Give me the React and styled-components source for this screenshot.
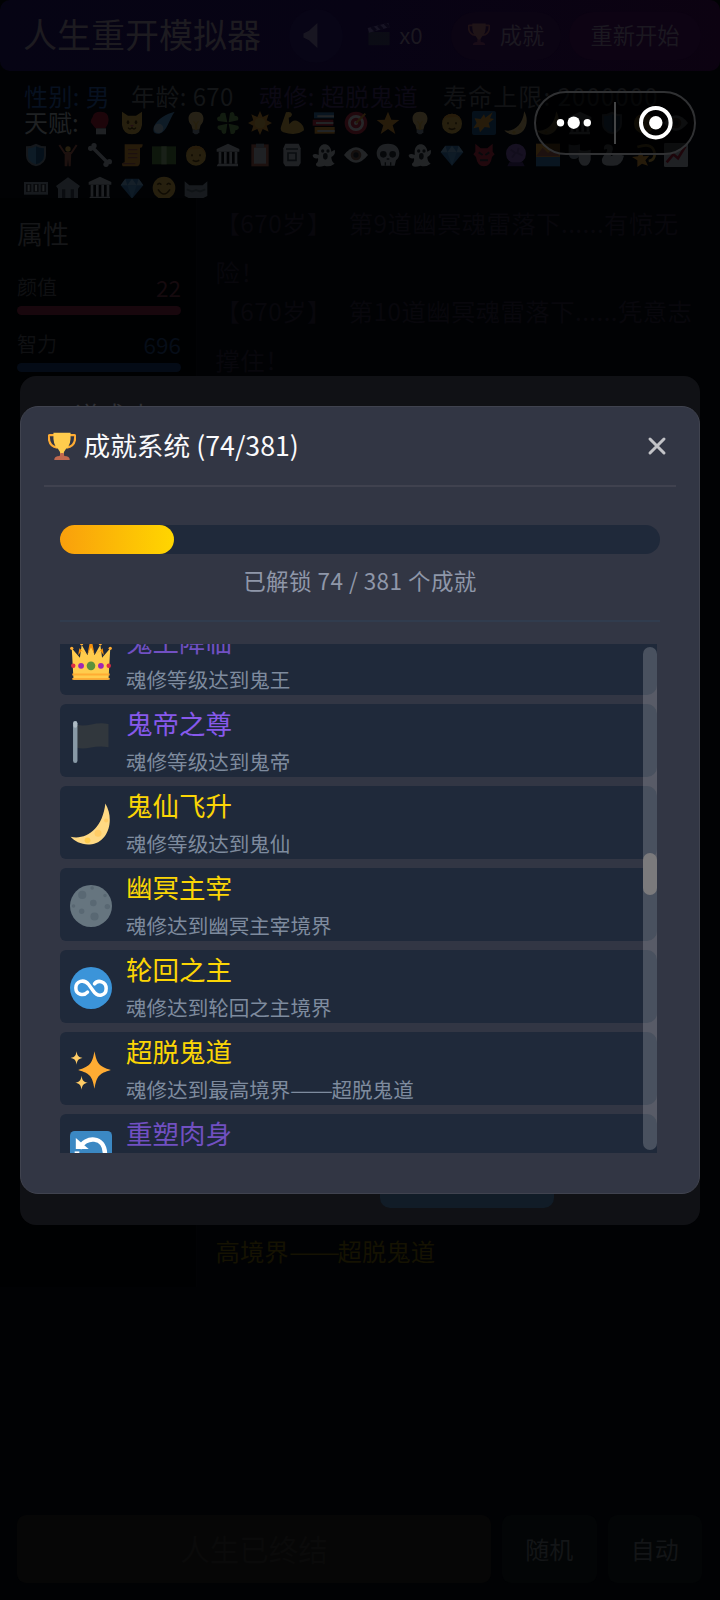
import styled, { createGlobalStyle } from "styled-components";

const GlobalStyle = createGlobalStyle`
  * {
    box-sizing: border-box;
  }

  body {
    margin: 0;
    background: #010204;
    font-family: "Noto Sans CJK SC", sans-serif;
    font-weight: 400;
  }
`;

const Page = styled.main`
  position: relative;
  display: flex;
  flex-direction: column;
  width: 720px;
  height: 1600px;
  overflow: hidden;
  background: #010204;
`;

const Header = styled.header`
  display: flex;
  align-items: center;
  height: 71px;
  padding-left: 23px;
  border-radius: 10px;
  background: linear-gradient(90deg, #060414 0%, #070314 50%, #0c0211 100%);
`;

const AppTitle = styled.h1`
  width: 266px;
  margin: -3px 0 0;
  font-size: 34px;
  font-weight: 400;
  line-height: 1;
  color: #1d1b20;
`;

const SoundButton = styled.button`
  display: grid;
  place-items: center;
  width: 54px;
  height: 54px;
  padding: 0;
  border: 0;
  border-radius: 50%;
  background: #080516;
`;

const HeaderButton = styled.button`
  display: flex;
  align-items: center;
  justify-content: center;
  width: ${({ $width }) => $width}px;
  height: 48px;
  margin-left: ${({ $left }) => $left}px;
  padding: 0 0 3px;
  border: 0;
  border-radius: 24px;
  background: ${({ $bg }) => $bg || "transparent"};
  color: #1b1820;
  font: inherit;
  font-size: 22.3px;
  line-height: 1;
`;

const Info = styled.section`
  height: 127px;
  padding: 13px 24px 0;
  overflow: hidden;
`;

const InfoLine = styled.div`
  display: flex;
  height: 24px;
  font-size: 24px;
  line-height: 24px;
  letter-spacing: 0.4px;
  white-space: pre;
`;

const Stat = styled.span`
  width: ${({ $width }) => $width}px;
  color: ${({ $color }) => $color};
  letter-spacing: ${({ $wide }) => $wide && "1.1px"};
`;

const TalentLine = styled.div`
  display: flex;
  align-items: center;
  height: 32.5px;
  margin-top: ${({ $first }) => ($first ? "-1.5px" : 0)};
`;

const TalentLabel = styled.span`
  width: 64px;
  margin-top: -2px;
  font-size: 24px;
  line-height: 1;
  color: #1f2123;
`;

const Talent = styled.span`
  display: flex;
  width: 32px;
  opacity: ${({ $faint }) => ($faint ? 0.08 : 0.145)};
`;

const Body = styled.section`
  display: flex;
  height: 1089px;
`;

const Sidebar = styled.aside`
  width: 197px;
  padding: 20px 15px 0 17px;
  background: #000102;
  border-right: 1px solid #020305;
`;

const SidebarTitle = styled.h2`
  margin: 0 0 24px;
  font-size: 26px;
  font-weight: 400;
  line-height: 30px;
  color: #151618;
`;

const Attribute = styled.div`
  height: 57px;
  padding-top: 4px;
`;

const AttributeHead = styled.div`
  display: flex;
  justify-content: space-between;
  margin-bottom: 8px;
  font-size: 20px;
  line-height: 22px;
  color: #0f1012;

  b {
    font-size: 22.5px;
    font-weight: 400;
    color: ${({ $color }) => $color};
  }
`;

const AttributeBar = styled.div`
  height: 9px;
  border-radius: 5px;
  background: ${({ $color }) => $color};
`;

const Log = styled.div`
  display: flex;
  flex: 1;
  flex-direction: column;
  padding: 0 0 12px 18.5px;
  font-size: 24.4px;
  line-height: 49px;
  letter-spacing: 0.4px;
  color: #08070c;
  white-space: pre;

  p {
    margin: 0 0 -10px;
  }
`;

const LogHighlight = styled.div`
  margin-top: auto;
  letter-spacing: 0;
  color: #151202;
`;

const DashBox = styled.span`
  display: inline-block;
  width: 2em;
  transform: scaleX(1.25);
  transform-origin: left;
`;

const Footer = styled.footer`
  display: flex;
  gap: 11px;
  margin-top: auto;
  padding: 0 18px 17px 17px;
`;

const FooterButton = styled.button`
  flex: ${({ $wide }) => ($wide ? "1" : "0 0 94.5px")};
  height: 68px;
  padding: 0 0 2px;
  border: 0;
  border-radius: 9px;
  background: ${({ $wide }) => ($wide ? "#060606" : "#030506")};
  color: ${({ $wide }) => ($wide ? "#0a0a0a" : "#131517")};
  font: inherit;
  font-size: ${({ $wide }) => ($wide ? 29.5 : 24)}px;
`;

const BackDialog = styled.section`
  position: absolute;
  top: 376px;
  left: 20px;
  display: flex;
  flex-direction: column;
  width: 680px;
  height: 849px;
  border-radius: 16px;
  background: #101115;

  h2 {
    margin: 20px 30px;
    font-size: 25px;
    font-weight: 400;
    line-height: 36px;
    color: #303136;
  }
`;

const BackDialogButton = styled.div`
  width: 174px;
  height: 68px;
  margin: auto 0 17px 360px;
  border-radius: 10px;
  background: #111c27;
`;

const Dialog = styled.section`
  position: absolute;
  top: 405.5px;
  left: 20px;
  width: 680px;
  height: 788px;
  padding: 0 23px;
  border: 1px solid #40434f;
  border-radius: 18px;
  background: #323644;
`;

const DialogHeader = styled.header`
  display: flex;
  align-items: center;
  height: 80.5px;
  padding: 0 9px 0 4px;
  border-bottom: 2px solid #40424f;

  h2 {
    flex: 1;
    margin: 0 0 0 7.5px;
    font-size: 26.7px;
    font-weight: 400;
    line-height: 1;
    color: #fafafc;
  }
`;

const CloseButton = styled.button`
  display: flex;
  padding: 0;
  border: 0;
  background: none;
`;

const DialogBody = styled.div`
  padding: 38px 16px 0;
`;

const Track = styled.div`
  height: 29px;
  border-radius: 15px;
  background: #1f293a;
`;

const Fill = styled.div`
  height: 100%;
  border-radius: 15px;
  background: linear-gradient(90deg, #f99f0c, #ffd600);
`;

const Summary = styled.p`
  height: 68px;
  margin: 0 0 21.5px;
  padding-top: 12px;
  border-bottom: 2px solid #313c4e;
  font-size: 22.5px;
  line-height: 28px;
  letter-spacing: 0.45px;
  text-align: center;
  color: #8f97a9;
`;

const ListArea = styled.div`
  position: relative;
  width: 597px;
  height: 509.5px;
  overflow: hidden;
`;

const List = styled.div`
  display: flex;
  flex-direction: column;
  gap: 9px;
  margin-top: -22px;
`;

const Row = styled.article`
  display: flex;
  flex: 0 0 73px;
  align-items: center;
  gap: 14px;
  padding-left: 10px;
  border-radius: 6px 10px 10px 6px;
  background: #1f293a;
`;

const RowIcon = styled.span`
  display: flex;
  margin-top: 3px;
`;

const RowTitle = styled.h3`
  margin: 0 0 7px;
  font-size: 26.5px;
  font-weight: 400;
  line-height: 34px;
  color: ${({ $tone }) =>
    ({ gold: "#fbd505", purple: "#8759ec", dim: "#7150c2" })[$tone]};
`;

const RowText = styled.p`
  margin: 0;
  font-size: 20.55px;
  line-height: 28px;
  color: #7e8b9e;
`;

const Scrollbar = styled.div`
  position: absolute;
  top: 3px;
  right: 0;
  bottom: 3px;
  width: 14px;
  padding-top: 206px;
  border-radius: 7px;
  background: rgba(255, 255, 255, 0.19);
`;

const Thumb = styled.div`
  height: 42px;
  border-radius: 7px;
  background: #7b7a7c;
`;

const Capsule = styled.div`
  position: absolute;
  top: 91px;
  left: 534px;
  display: flex;
  align-items: center;
  width: 162px;
  height: 64px;
  border: 2px solid #303133;
  border-radius: 32px;
  background: rgba(0, 0, 0, 0.6);
`;

const SPARK = "c1 7 3 9 9 10c-6 1-8 3-9 10c-1-7-3-9-9-10c6-1 8-3 9-10z";

const face = (
  <>
    <circle cx="18" cy="18" r="17" fill="#ffcc4d" />
    <path d="M8 13q3-4 6 0M22 13q3-4 6 0M9 20q9 14 18 0" fill="none" stroke="#664500" strokeWidth="2.5" />
  </>
);

const child = (
  <>
    <circle cx="18" cy="19" r="15" fill="#ffcc4d" />
    <path d="M4 16C5 0 31 0 32 16L26 9L8 10z" fill="#ffac33" />
    <path d="M12 17v3M24 17v3M13 26q5 3 10 0" fill="none" stroke="#664500" strokeWidth="2.5" />
  </>
);

const temple = (
  <>
    <path d="M18 1L35 9v4H1V9zM3 31h30v4H1z" fill="#ccd6dd" />
    <path d="M6 13v18M14 13v18M22 13v18M30 13v18" stroke="#ccd6dd" strokeWidth="4" />
  </>
);

const ghost = (
  <>
    <path d="M10 13C10-2 28-2 29 13l5-3q2 8-5 11q0 7 5 10q-8 6-15 3Q5 38 6 31q4-2 3-8q-8 1-8-5q3-3 9 0z" fill="#e1e8ed" />
    <circle cx="16" cy="12" r="2.5" fill="#292f33" />
    <circle cx="24" cy="12" r="2.5" fill="#292f33" />
    <ellipse cx="20" cy="20" rx="3.5" ry="5" fill="#292f33" />
  </>
);

const shield = (
  <>
    <path d="M18 1q7 4 15 4v14q0 12-15 16Q3 31 3 19V5q8 0 15-4z" fill="#8899a6" />
    <path d="M18 5q5 3 12 3v11q0 9-12 13Q6 28 6 19V8q7 0 12-3z" fill="#55acee" />
    <path d="M18 5v27q12-4 12-13V8q-7 0-12-3z" fill="#269" />
  </>
);

const gem = (
  <>
    <path d="M8 4h20l7 10-17 20L1 14z" fill="#3f8fd0" />
    <path d="M8 4l3 10L18 4l7 10 3-10 7 10H1z" fill="#8ccaf7" />
    <path d="M11 14h14l-7 20z" fill="#5dadec" />
  </>
);

const bulb = (
  <>
    <path d="M18 1C4 1 5 16 11 21l2 7h10l2-7C31 16 32 1 18 1z" fill="#ffd983" />
    <path d="M13 28h10v4l-3 3h-4l-3-3z" fill="#99aab5" />
    <path d="M14 15l3 4v9M22 15l-3 4v9" fill="none" stroke="#ffcc4d" strokeWidth="2" />
  </>
);

const moon = (
  <>
    <path d="M30.3.5C39 15 32 35 17 35.5C10 36 4 33 .5 29C14 32 28 22 30.3.5z" fill="#ffd983" />
    <circle cx="24" cy="26" r="3" fill="#ffcc66" />
    <circle cx="15" cy="32" r="2.5" fill="#ffcc4d" />
    <circle cx="31" cy="15" r="1.7" fill="#ffcc66" />
  </>
);

const trophy = (
  <>
    <path d="M8 4H2q-1 0-1 2c0 8 4 13 11 14M28 4h6q1 0 1 2c0 8-4 13-11 14" fill="none" stroke="#ffac33" strokeWidth="2.8" />
    <path d="M7 1h22q1 17-6 21-3 3-3 8h-4q0-5-3-8Q6 18 7 1z" fill="#ffcc4d" />
    <path d="M11 36h-3q0-5 7-5l1-4h4l1 4q7 0 7 5z" fill="#c1694f" />
  </>
);

const ART = {
  face,
  child,
  temple,
  ghost,
  shield,
  gem,
  bulb,
  moon,
  trophy,
  glove: (
    <>
      <path d="M7 9Q8 1 19 1q12 0 12 12 0 7-5 13H11L4 17q0-5 3-8z" fill="#be1931" />
      <path d="M12 26h15v9H12z" fill="#ccd6dd" />
    </>
  ),
  cat: (
    <>
      <path d="M3 1l9 6h12l9-6v20q-2 14-15 14T3 21z" fill="#ffcc4d" />
      <ellipse cx="12" cy="17" rx="2" ry="3" fill="#664500" />
      <ellipse cx="24" cy="17" rx="2" ry="3" fill="#664500" />
      <path d="M12 25q3 4 6 0q3 4 6 0" fill="none" stroke="#664500" strokeWidth="2" />
      <path d="M15 21h6l-3 3z" fill="#e75a70" />
    </>
  ),
  comet: (
    <>
      <path d="M34 1C22 4 8 12 3 23q-4 12 8 11C23 30 25 14 34 1z" fill="#5dadec" />
      <circle cx="10" cy="26" r="7" fill="#bdddf4" />
    </>
  ),
  clover: (
    <g fill="#77b255">
      <path d="M17 17L3 15Q-1 9 6 8q0-7 8-5z" />
      <path d="M19 17L21 3q6-4 7 4 7 0 5 7z" />
      <path d="M19 19l14 3q4 5-4 7 0 7-7 5z" />
      <path d="M17 19L15 33q-6 4-7-4-8-1-5-7z" />
    </g>
  ),
  sun: (
    <>
      <path d="M18 0l4 9 9-4-3 9 8 4-8 4 3 9-9-4-4 9-4-9-9 4 3-9-8-4 8-4-3-9 9 4z" fill="#ffac33" />
      <circle cx="18" cy="18" r="8" fill="#ffcc4d" />
    </>
  ),
  arm: <path d="M9 2q8-2 9 3-1 5-5 5l1 10q6-9 14-4 8 5 8 13Q25 38 5 32-1 30 2 22z" fill="#ffcc4d" />,
  books: (
    <>
      <path d="M3 2h30v9H3z" fill="#3b88c3" />
      <path d="M1 13h31v9H1z" fill="#dd2e44" />
      <path d="M4 24h30v10H4z" fill="#ffac33" />
      <path d="M8 8h25M6 18h26M8 30h26" stroke="#e1e8ed" strokeWidth="3" />
    </>
  ),
  target: (
    <>
      <circle cx="18" cy="18" r="17" fill="#dd2e44" />
      <circle cx="18" cy="18" r="10" fill="none" stroke="#fff" strokeWidth="4" />
      <circle cx="18" cy="18" r="3" fill="#fff" />
      <path d="M18 18L32 4" stroke="#ffac33" strokeWidth="3" />
    </>
  ),
  star: <path d="M18 1l5 12 12 .5-10 8 4 13-11-7.5-11 7.5 4-13-10-8L13 13z" fill="#ffac33" />,
  blast: (
    <>
      <rect width="36" height="36" rx="3" fill="#226699" />
      <path d="M31 2l-4 9 6 1-8 6 2 7-8-1-7 8-2-8-8 2 5-8-3-7 9 1 5-7 2 5z" fill="#ffac33" />
    </>
  ),
  person: (
    <>
      <circle cx="18" cy="9" r="4" fill="#ffcc4d" />
      <path d="M5 3l8 12h10l8-12" fill="none" stroke="#c1694f" strokeWidth="3" />
      <path d="M13 14h10l-1 21h-3l-1-11-1 11h-4z" fill="#c1694f" />
    </>
  ),
  bone: (
    <>
      <path d="M6 6l24 24" stroke="#ccd6dd" strokeWidth="5" />
      <g fill="#ccd6dd">
        <circle cx="4" cy="8" r="4" />
        <circle cx="9" cy="4" r="4" />
        <circle cx="32" cy="28" r="4" />
        <circle cx="27" cy="32" r="4" />
      </g>
    </>
  ),
  scroll: (
    <>
      <path d="M7 2h27q0 6-4 5v21q0 7-6 7H4q-3-5 3-6z" fill="#ffac33" />
      <path d="M12 10h14M12 16h14M12 22h14M4 31h19" stroke="#c1694f" strokeWidth="2" />
    </>
  ),
  money: (
    <>
      <path d="M0 5h36v27H0z" fill="#5c913b" />
      <path d="M14 5h8v27h-8z" fill="#a7d28b" />
    </>
  ),
  clipboard: (
    <>
      <path d="M5 2h26v33H5z" fill="#c1694f" />
      <path d="M9 7h18v24H9z" fill="#ccd6dd" />
      <path d="M12 1h12v6H12z" fill="#99aab5" />
    </>
  ),
  tin: (
    <>
      <path d="M8 1h20l3 7v22l-3 5H8l-3-5V8z" fill="#ccd6dd" />
      <path d="M9 9h18M12 15h12v11H12z" fill="none" stroke="#404c55" strokeWidth="2.5" />
    </>
  ),
  eye: (
    <>
      <path d="M0 18Q18-5 36 18 18 41 0 18z" fill="#e1e8ed" />
      <circle cx="18" cy="18" r="8" fill="#89664c" />
      <circle cx="18" cy="18" r="4" fill="#292f33" />
    </>
  ),
  skull: (
    <>
      <path d="M18 1C-2 1-2 21 6 26l2 8h20l2-8C38 21 38 1 18 1z" fill="#ccd6dd" />
      <circle cx="11" cy="17" r="5" fill="#292f33" />
      <circle cx="25" cy="17" r="5" fill="#292f33" />
      <path d="M16 24h4M14 29v5M22 29v5" stroke="#292f33" strokeWidth="2" />
    </>
  ),
  ogre: (
    <>
      <path d="M5 1l8 7h10l8-7v12l3 4-4 4q-2 14-12 14T6 21l-4-4 3-4z" fill="#dd2e44" />
      <path d="M10 14l6 4M26 14l-6 4M12 26h12" stroke="#31373d" strokeWidth="3" />
    </>
  ),
  crystal: (
    <>
      <circle cx="18" cy="16" r="15" fill="#9266cc" />
      <path d="M10 10l7 5-5 7M22 7l-2 8 8 4" fill="none" stroke="#744eaa" strokeWidth="3" />
      <path d="M8 29h20l3 6H5z" fill="#553788" />
    </>
  ),
  sunset: (
    <>
      <path d="M0 1h36v20H0z" fill="#ffac33" />
      <path d="M0 20L10 7l8 8 8-6 10 11z" fill="#c1694f" />
      <path d="M0 21h36v14H0z" fill="#3b88c3" />
    </>
  ),
  masks: (
    <>
      <path d="M1 2q8 3 17 0v14q-2 8-9 8T1 16z" fill="#99aab5" />
      <path d="M16 10q8 3 18 0v15q-2 9-9 9t-9-9z" fill="#ccd6dd" />
    </>
  ),
  swan: <path d="M6 10Q5 2 12 2q9 1 7 9-2 5-3 9 9-6 20-1-3 15-16 15Q1 36 3 24q1-4 6-9 3-5 1-6-2 0-4 1z" fill="#ccd6dd" />,
  dizzy: (
    <>
      <path d="M13 12l4 8 9-1-6 7 4 8-9-3-7 5V26l-8-5 9-1z" fill="#ffac33" />
      <path d="M8 6Q33-2 34 17q0 9-9 10" fill="none" stroke="#ffcc4d" strokeWidth="4" />
    </>
  ),
  chart: (
    <>
      <rect width="36" height="36" rx="2" fill="#ccd6dd" />
      <path d="M4 29L14 17l7 6L32 5" fill="none" stroke="#be1931" strokeWidth="4" />
    </>
  ),
  slots: (
    <>
      <path d="M0 9h36v19H0z" fill="#99aab5" />
      <path d="M3 12h8v12H3zM14 12h8v12h-8zM25 12h8v12h-8z" fill="#31373d" />
      <path d="M7 13v10M18 13v10M29 13v10" stroke="#e1e8ed" strokeWidth="3" />
    </>
  ),
  house: (
    <>
      <path d="M18 2L36 15l-3 4v15H3V19l-3-4z" fill="#99aab5" />
      <path d="M9 20h5v14H9zM22 20h5v14h-5z" fill="#404c55" />
    </>
  ),
  wolf: (
    <>
      <path d="M1 8l7 6h20l7-6v22l-6 3-11 3-11-3-6-3z" fill="#99aab5" />
      <path d="M4 20l8 3 6-2 6 2 8-3" fill="none" stroke="#66757f" strokeWidth="3" />
    </>
  ),
  clapper: (
    <>
      <path d="M2 15h32v20H2z" fill="#3f7123" />
      <path d="M1 9L32 1l2 7L3 16z" fill="#ccd6dd" />
      <path d="M7 7l6 6M17 5l6 6M27 2l6 6" stroke="#292f33" strokeWidth="5" />
    </>
  ),
  speaker: <path d="M25 0v36L13 25l-8-4v-6l8-4z" fill="#d6dc9d" />,
  crown: (
    <>
      <path d="M3 35L1.500 8l7 8L10 5l5 9 3-11 3 11 5-9 1.500 11 7-8L33 35z" fill="#ffcc4d" />
      <path d="M8 8l-1 6 3-4 4 3zM17 3l-2 10 3-6 3 6-2-10zM28 8l1 6-3-4-4 3z" fill="#f4900c" />
      <g fill="#ffac33">
        <circle cx="1.500" cy="8" r="1.400" />
        <circle cx="10" cy="4" r="1.400" />
        <circle cx="18" cy="2" r="1.400" />
        <circle cx="26" cy="4" r="1.400" />
        <circle cx="34.500" cy="8" r="1.400" />
      </g>
      <path d="M2 29.500h32v1.800H2zM2 33.500h32V35H2z" fill="#ffac33" />
      <circle cx="18" cy="23" r="3.700" fill="#5c913b" />
      <circle cx="9.500" cy="23" r="2.500" fill="#9f26b5" />
      <circle cx="26.500" cy="23" r="2.500" fill="#9f26b5" />
      <circle cx="2.800" cy="23" r="1.900" fill="#dd2e44" />
      <circle cx="33.200" cy="23" r="1.900" fill="#dd2e44" />
    </>
  ),
  flag: (
    <>
      <path d="M6 3c8 3 15-3 27-.5v20c-12-2.500-19 3-27 .5z" fill="#31373d" />
      <path d="M4.500 2v32" stroke="#8899a6" strokeWidth="3.800" strokeLinecap="round" />
      <path d="M4.500 2v2" stroke="#aebbc4" strokeWidth="3.400" strokeLinecap="round" />
    </>
  ),
  fullMoon: (
    <>
      <circle cx="18" cy="18" r="18" fill="#66757f" />
      <g fill="#596873">
        <circle cx="10.500" cy="8.500" r="3.500" />
        <circle cx="20" cy="15.500" r="2.800" />
        <circle cx="21" cy="27" r="3.500" />
        <circle cx="10" cy="22.500" r="2.300" />
        <circle cx="32" cy="18.500" r="2.300" />
        <circle cx="30" cy="9" r="1.500" />
        <circle cx="19" cy="2.500" r="1.500" />
        <circle cx="3" cy="18" r="1.500" />
      </g>
    </>
  ),
  infinity: (
    <>
      <circle cx="18" cy="18" r="18" fill="#3b94d9" />
      <path d="M15 21.500C12 25 5 24 5 18s7-8 11-3l4 5.500c4 6 11 4 11-2s-7-8-10-4" fill="none" stroke="#fff" strokeWidth="3" strokeLinecap="round" />
    </>
  ),
  sparkles: (
    <>
      <path d="M21 2c2 11 4 13 14 16-10 3-12 5-14 16-2-11-4-13-14-16 10-3 12-5 14-16z" fill="#ffac33" />
      <path d={`M9 0${SPARK}`} transform="translate(.5 2) scale(.57)" fill="#ffcc66" />
      <path d={`M9 0${SPARK}`} transform="translate(4.500 23) scale(.6)" fill="#ffcc66" />
    </>
  ),
  reload: (
    <>
      <rect width="36" height="36" rx="4" fill="#3b88c3" />
      <path d="M8 15C13 4 30 4 30 20q0 10-12 10" fill="none" stroke="#fff" strokeWidth="3.800" />
      <path d="M5 6v9.500h11z" fill="#fff" />
      <path d="M4 17.500h4v6H4z" fill="#fff" />
    </>
  ),
};

function Emoji({ name, size = 24 }) {
  return (
    <svg width={size} height={size} viewBox="0 0 36 36" aria-hidden="true">
      {ART[name]}
    </svg>
  );
}

// widens a double dash to two full characters
function Dashed({ text }) {
  const [before, after] = text.split("——");

  if (after === undefined) return text;

  return (
    <>
      {before}
      <DashBox>——</DashBox>
      {after}
    </>
  );
}

const talents = [
  ["glove", "cat", "comet", "bulb", "clover", "sun", "arm", "books", "target", "star", "bulb", "child", "blast", "moon", "moon", "temple", "shield", "child", "eye"],
  ["shield", "person", "bone", "scroll", "money", "child", "temple", "clipboard", "tin", "ghost", "eye", "skull", "ghost", "gem", "ogre", "crystal", "sunset", "masks", "swan", "dizzy", "chart"],
  ["slots", "house", "temple", "gem", "face", "wolf"],
];

const achievements = [
  { icon: "crown", title: "鬼王降临", text: "魂修等级达到鬼王", tone: "dim" },
  { icon: "flag", title: "鬼帝之尊", text: "魂修等级达到鬼帝", tone: "purple" },
  { icon: "moon", title: "鬼仙飞升", text: "魂修等级达到鬼仙", tone: "gold" },
  { icon: "fullMoon", title: "幽冥主宰", text: "魂修达到幽冥主宰境界", tone: "gold" },
  { icon: "infinity", title: "轮回之主", text: "魂修达到轮回之主境界", tone: "gold" },
  { icon: "sparkles", title: "超脱鬼道", text: "魂修达到最高境界——超脱鬼道", tone: "gold" },
  { icon: "reload", title: "重塑肉身", text: "\u00a0", tone: "dim" },
];

export default function App() {
  const unlocked = 74;
  const total = 381;

  return (
    <Page>
      <GlobalStyle />

      <Header>
        <AppTitle>人生重开模拟器</AppTitle>
        <SoundButton>
          <Talent $faint>
            <Emoji name="speaker" size={25} />
          </Talent>
        </SoundButton>
        <HeaderButton $width={92} $left={6}>
          <Talent $faint>
            <Emoji name="clapper" />
          </Talent>
          x0
        </HeaderButton>
        <HeaderButton $width={110} $left={10} $bg="#0b0413">
          <Talent $faint>
            <Emoji name="trophy" size={22} />
          </Talent>
          成就
        </HeaderButton>
        <HeaderButton $width={132} $left={8} $bg="#0d0313">
          重新开始
        </HeaderButton>
      </Header>

      <Info>
        <InfoLine>
          <Stat $width={107} $color="#071120">性别: 男</Stat>
          <Stat $width={128} $color="#131517">年龄: 670</Stat>
          <Stat $width={184} $color="#0c0914">魂修: 超脱鬼道</Stat>
          <Stat $color="#111214" $wide>寿命上限: 2000000</Stat>
        </InfoLine>
        {talents.map((line, index) => (
          <TalentLine key={index} $first={index === 0}>
            {index === 0 && <TalentLabel>天赋:</TalentLabel>}
            {line.map((name, i) => (
              <Talent key={i}>
                <Emoji name={name} />
              </Talent>
            ))}
          </TalentLine>
        ))}
      </Info>

      <Body>
        <Sidebar>
          <SidebarTitle>属性</SidebarTitle>
          <Attribute>
            <AttributeHead $color="#150a0e">
              颜值 <b>22</b>
            </AttributeHead>
            <AttributeBar $color="#18070d" />
          </Attribute>
          <Attribute>
            <AttributeHead $color="#060d18">
              智力 <b>696</b>
            </AttributeHead>
            <AttributeBar $color="#040b16" />
          </Attribute>
        </Sidebar>
        <Log>
          <p>{"【670岁】\u2004\u2004第9道幽冥魂雷落下......有惊无\n险！"}</p>
          <p>{"【670岁】\u2004\u2004第10道幽冥魂雷落下......凭意志\n撑住！"}</p>
          <LogHighlight>
            <Dashed text="高境界——超脱鬼道" />
          </LogHighlight>
        </Log>
      </Body>

      <Footer>
        <FooterButton $wide>人生已终结</FooterButton>
        <FooterButton>随机</FooterButton>
        <FooterButton>自动</FooterButton>
      </Footer>

      <BackDialog>
        <h2>天道成功</h2>
        <BackDialogButton />
      </BackDialog>

      <Dialog>
        <DialogHeader>
          <Emoji name="trophy" size={28} />
          <h2>
            成就系统 ({unlocked}/{total})
          </h2>
          <CloseButton aria-label="关闭">
            <svg width="20" height="20" viewBox="0 0 20 20">
              <path d="M3 3l14 14M17 3L3 17" stroke="#c2c3c7" strokeWidth="3" strokeLinecap="round" />
            </svg>
          </CloseButton>
        </DialogHeader>

        <DialogBody>
          <Track>
            <Fill style={{ width: `${(unlocked / total) * 98}%` }} />
          </Track>
          <Summary>
            已解锁 {unlocked} / {total} 个成就
          </Summary>

          <ListArea>
            <List>
              {achievements.map((item) => (
                <Row key={item.title}>
                  <RowIcon>
                    <Emoji name={item.icon} size={42} />
                  </RowIcon>
                  <div>
                    <RowTitle $tone={item.tone}>{item.title}</RowTitle>
                    <RowText>
                      <Dashed text={item.text} />
                    </RowText>
                  </div>
                </Row>
              ))}
            </List>
            <Scrollbar>
              <Thumb />
            </Scrollbar>
          </ListArea>
        </DialogBody>
      </Dialog>

      <Capsule>
        <svg width="158" height="60" viewBox="0 0 158 60" aria-hidden="true">
          <g fill="#fff">
            <circle cx="24.500" cy="29.700" r="3.700" />
            <circle cx="37.700" cy="29.700" r="6.200" />
            <circle cx="51.300" cy="29.700" r="3.700" />
            <circle cx="119.800" cy="29.700" r="6.700" />
          </g>
          <circle cx="119.800" cy="29.700" r="14.800" fill="none" stroke="#fff" strokeWidth="4" />
          <path d="M79 9v42" stroke="#444546" strokeWidth="2" />
        </svg>
      </Capsule>
    </Page>
  );
}
